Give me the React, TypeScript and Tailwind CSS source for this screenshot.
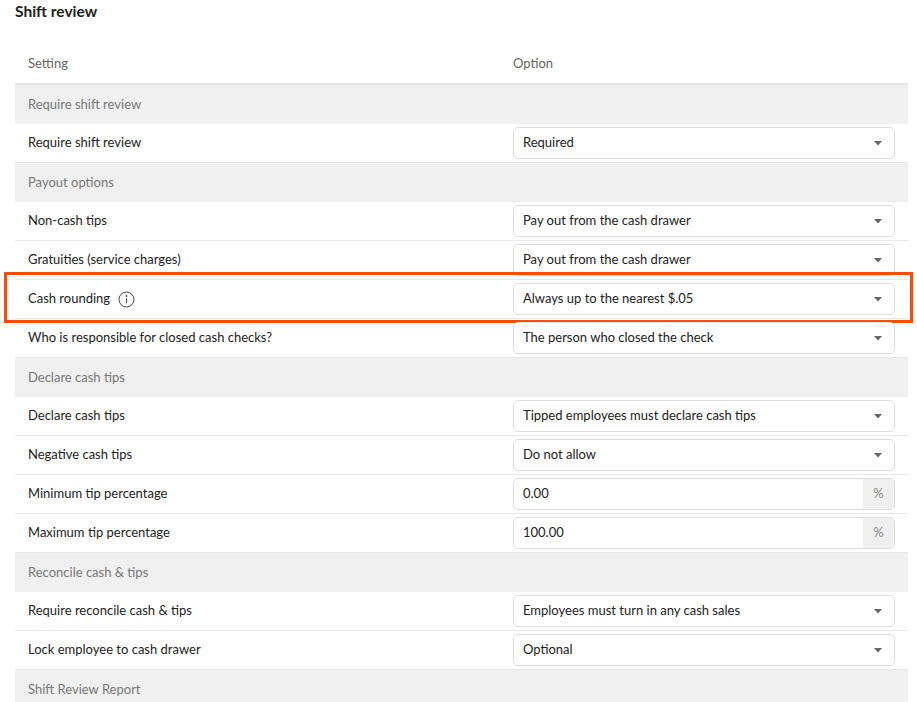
import React from "react";

type Row =
  | { kind: "section"; label: string }
  | { kind: "select"; label: string; value: string; info?: boolean; hl?: boolean }
  | { kind: "pct"; label: string; value: string };

const rows: Row[] = [
  { kind: "section", label: "Require shift review" },
  { kind: "select", label: "Require shift review", value: "Required" },
  { kind: "section", label: "Payout options" },
  { kind: "select", label: "Non-cash tips", value: "Pay out from the cash drawer" },
  { kind: "select", label: "Gratuities (service charges)", value: "Pay out from the cash drawer" },
  { kind: "select", label: "Cash rounding", value: "Always up to the nearest $.05", info: true, hl: true },
  { kind: "select", label: "Who is responsible for closed cash checks?", value: "The person who closed the check" },
  { kind: "section", label: "Declare cash tips" },
  { kind: "select", label: "Declare cash tips", value: "Tipped employees must declare cash tips" },
  { kind: "select", label: "Negative cash tips", value: "Do not allow" },
  { kind: "pct", label: "Minimum tip percentage", value: "0.00" },
  { kind: "pct", label: "Maximum tip percentage", value: "100.00" },
  { kind: "section", label: "Reconcile cash & tips" },
  { kind: "select", label: "Require reconcile cash & tips", value: "Employees must turn in any cash sales" },
  { kind: "select", label: "Lock employee to cash drawer", value: "Optional" },
  { kind: "section", label: "Shift Review Report" },
];

export default function App() {
  return (
    <div className="w-[917px] h-[702px] overflow-hidden bg-white text-[13px] text-[#222]" style={{ fontFamily: "Lato, 'Open Sans', sans-serif" }}>
      <div className="px-[15px] pt-[1px]">
        <h1 className="text-[15.5px] font-bold text-[#222] h-[22px] leading-[20px]">Shift review</h1>
        <div className="mt-[22px] w-[893px]">
          <div className="flex h-[40px] items-center border-b-2 border-[#e5e5e5] text-[#666]">
            <div className="w-[498px] pl-[13px]">Setting</div>
            <div>Option</div>
          </div>
          {rows.map((r, i) =>
            r.kind === "section" ? (
              <div key={i} className="flex h-[39px] items-center bg-[#f0f0f0] pl-[13px] text-[#777]">{r.label}</div>
            ) : (
              <div key={i} className="relative flex h-[39px] items-center border-b border-[#e8e8e8]">
                {r.kind === "select" && r.hl && (
                  <div className="pointer-events-none absolute left-[-11px] right-[-5px] top-[-8px] bottom-[-5px] border-[3px] border-[#fc4c02]" />
                )}
                <div className="flex w-[498px] items-center gap-[8px] pl-[13px]">
                  {r.label}
                  {r.kind === "select" && r.info && (
                    <svg width="17" height="17" viewBox="0 0 17 17" className="ml-[0px]">
                      <circle cx="8.5" cy="8.5" r="7.5" fill="none" stroke="#444" strokeWidth="1" />
                      <circle cx="8.5" cy="5" r="0.9" fill="#444" />
                      <path d="M8.5 7.3v5" stroke="#444" strokeWidth="1.1" />
                    </svg>
                  )}
                </div>
                {r.kind === "select" ? (
                  <div className="flex h-[32px] w-[382px] items-center justify-between rounded-[5px] border border-[#ddd] pl-[9px] pr-[12px]">
                    <span>{r.value}</span>
                    <svg width="8" height="5" viewBox="0 0 8 5"><path d="M0 0h8L4 4.5z" fill="#666" /></svg>
                  </div>
                ) : (
                  <div className="flex h-[32px] w-[382px] overflow-hidden rounded-[5px] border border-[#ddd]">
                    <div className="flex flex-1 items-center pl-[9px]">{r.value}</div>
                    <div className="flex w-[31px] items-center justify-center bg-[#f0f0f0] text-[#888]">%</div>
                  </div>
                )}
              </div>
            )
          )}
        </div>
      </div>
    </div>
  );
}
